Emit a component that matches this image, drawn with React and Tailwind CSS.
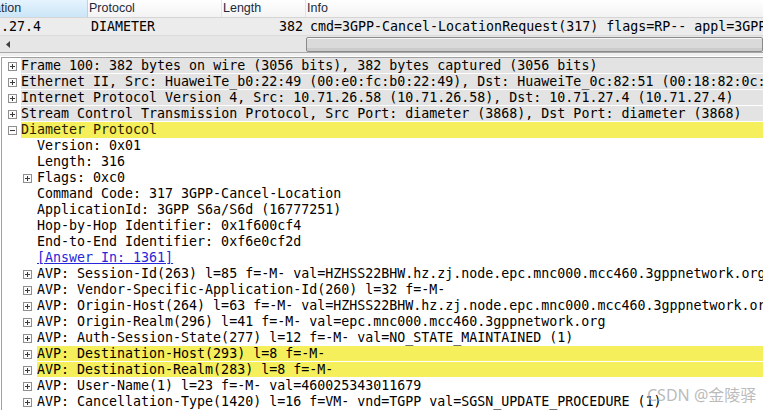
import React from "react";

const mono = { fontFamily: '"DejaVu Sans Mono", "Liberation Mono", monospace' };

function Box({ open }) {
  return (
    <svg width="9" height="9" viewBox="0 0 9 9" className="block">
      <rect x="0.5" y="0.5" width="8" height="8" fill="#fbfbfb" stroke="#8f8f8f" />
      <line x1="2" y1="4.5" x2="7" y2="4.5" stroke="#3a3a3a" />
      {!open && <line x1="4.5" y1="2" x2="4.5" y2="7" stroke="#3a3a3a" />}
    </svg>
  );
}

const top = [
  "Frame 100: 382 bytes on wire (3056 bits), 382 bytes captured (3056 bits)",
  "Ethernet II, Src: HuaweiTe_b0:22:49 (00:e0:fc:b0:22:49), Dst: HuaweiTe_0c:82:51 (00:18:82:0c:82:51)",
  "Internet Protocol Version 4, Src: 10.71.26.58 (10.71.26.58), Dst: 10.71.27.4 (10.71.27.4)",
  "Stream Control Transmission Protocol, Src Port: diameter (3868), Dst Port: diameter (3868)",
];

const fields = [
  { t: "Version: 0x01" },
  { t: "Length: 316" },
  { t: "Flags: 0xc0", box: true },
  { t: "Command Code: 317 3GPP-Cancel-Location" },
  { t: "ApplicationId: 3GPP S6a/S6d (16777251)" },
  { t: "Hop-by-Hop Identifier: 0x1f600cf4" },
  { t: "End-to-End Identifier: 0xf6e0cf2d" },
  { t: "[Answer In: 1361]", link: true },
  { t: "AVP: Session-Id(263) l=85 f=-M- val=HZHSS22BHW.hz.zj.node.epc.mnc000.mcc460.3gppnetwork.org", box: true },
  { t: "AVP: Vendor-Specific-Application-Id(260) l=32 f=-M-", box: true },
  { t: "AVP: Origin-Host(264) l=63 f=-M- val=HZHSS22BHW.hz.zj.node.epc.mnc000.mcc460.3gppnetwork.org", box: true },
  { t: "AVP: Origin-Realm(296) l=41 f=-M- val=epc.mnc000.mcc460.3gppnetwork.org", box: true },
  { t: "AVP: Auth-Session-State(277) l=12 f=-M- val=NO_STATE_MAINTAINED (1)", box: true },
  { t: "AVP: Destination-Host(293) l=8 f=-M-", box: true, hl: true },
  { t: "AVP: Destination-Realm(283) l=8 f=-M-", box: true, hl: true },
  { t: "AVP: User-Name(1) l=23 f=-M- val=460025343011679", box: true },
  { t: "AVP: Cancellation-Type(1420) l=16 f=VM- vnd=TGPP val=SGSN_UPDATE_PROCEDURE (1)", box: true },
];

export default function App() {
  return (
    <div className="relative w-[763px] h-[410px] overflow-hidden bg-white text-black">
      {/* packet list */}
      <div className="h-[56px] bg-[#f0f0f0]">
        <div
          className="flex h-[18px] border-b border-[#d5d5d5] bg-gradient-to-b from-white to-[#f3f3f3] text-[12.5px] text-[#1e2a3a]"
          style={{ fontFamily: '"Liberation Sans", Arial, sans-serif' }}
        >
          <div className="w-[88px] shrink-0 border-r border-[#b5d3ea] bg-gradient-to-b from-[#e5f3fd] to-[#cbe6f8] leading-[17px] whitespace-nowrap overflow-hidden">
            <span className="-ml-[6px]">ation</span>
          </div>
          <div className="w-[134px] shrink-0 border-r border-[#e3e3e3] pl-[1px] leading-[17px]">Protocol</div>
          <div className="w-[84px] shrink-0 border-r border-[#e3e3e3] pl-[1px] leading-[17px]">Length</div>
          <div className="flex-1 pl-[1px] leading-[17px]">Info</div>
        </div>
        <div className="flex h-[18px] bg-[#ececec] border-b border-[#dcdcdc] text-[13.3px] leading-[17px] whitespace-nowrap overflow-hidden" style={mono}>
          <div className="w-[88px] shrink-0 pl-[1px]">.27.4</div>
          <div className="w-[134px] shrink-0 pl-[3px]">DIAMETER</div>
          <div className="w-[84px] shrink-0 text-right pr-[3px]">382</div>
          <div className="flex-1 pl-[4px]">cmd=3GPP-Cancel-LocationRequest(317) flags=RP-- appl=3GPP</div>
        </div>
        <div className="flex h-[17px] items-center bg-[#e6e6e6] border-b border-[#a8a8a8]">
          <div className="w-[306px] shrink-0 pl-[6px]">
            <svg width="4" height="7" viewBox="0 0 4 7" className="block">
              <path d="M4 0 L0 3.5 L4 7 Z" fill="#404040" />
            </svg>
          </div>
          <div className="grow h-[15px] rounded-[2px] border border-[#8a8a8a] bg-[#dadada] shadow-[inset_0_1px_0_#f6f6f6,inset_0_-3px_0_#cbcbcb]" />
        </div>
      </div>

      {/* detail tree */}
      <div className="mt-[1px] ml-[1px] border-l border-t border-[#a0a0a0] text-[13.3px] leading-[16px] whitespace-nowrap" style={mono}>
        {top.map((t) => (
          <div key={t} className="flex h-[16px]">
            <div className="w-[19px] shrink-0 flex items-center justify-center pl-[1px]">
              <Box />
            </div>
            <div className="flex-1 min-w-0 bg-[#e3e3e3] border-b border-white">{t}</div>
          </div>
        ))}
        <div className="flex h-[16px]">
          <div className="w-[19px] shrink-0 flex items-center justify-center pl-[1px]">
            <Box open />
          </div>
          <div className="flex-1 min-w-0 bg-[#f4ef5b] text-[#2a1c00]">Diameter Protocol</div>
        </div>
        {fields.map((f) => (
          <div key={f.t} className="flex h-[16px]">
            <div className="w-[35px] shrink-0 flex items-center justify-end pr-[5px]">{f.box && <Box />}</div>
            <div className={`flex-1 min-w-0 ${f.hl ? "bg-[#f4ef5b] border-b border-white" : ""}`}>
              {f.link ? <span className="text-[#2727d9] underline">{f.t}</span> : f.t}
            </div>
          </div>
        ))}
      </div>

      <div
        className="absolute left-[647px] top-[383px] text-[16px] text-[#a9a9a9]/80"
        style={{ fontFamily: '"Noto Sans", "Noto Sans CJK SC", sans-serif' }}
      >
        CSDN @金陵驿
      </div>
    </div>
  );
}
